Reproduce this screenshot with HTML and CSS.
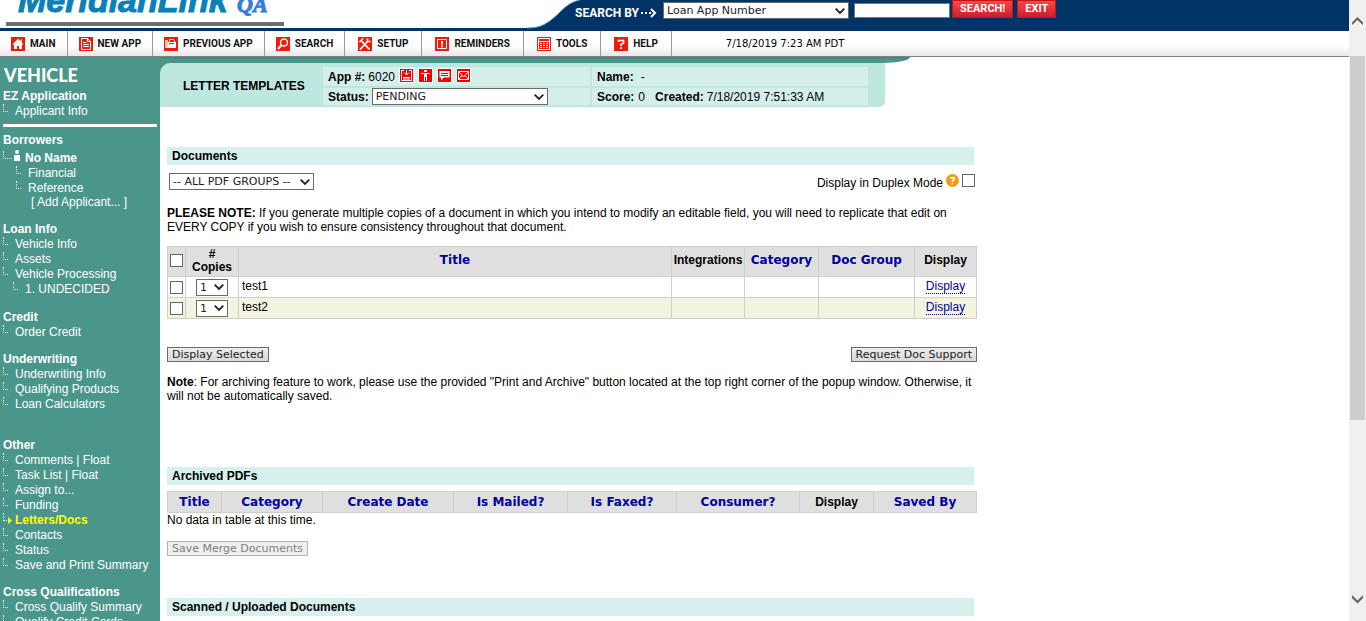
FILE: index.html
```html
<!DOCTYPE html>
<html lang="en">
<head>
<meta charset="utf-8">
<title>Letter Templates</title>
<link rel="stylesheet" href="styles.css">
</head>
<body>
<svg class="defs" aria-hidden="true">
  <symbol id="chev" viewBox="0 0 10 6"><path d="M0.7 0.7L5 5l4.300-4.300" fill="none" stroke="#222" stroke-width="1.800"/></symbol>
</svg>
<div class="window">
  <div class="page">
    <header class="top">
      <svg class="brand" width="575" height="28" viewBox="0 0 575 28" role="img" aria-label="MeridianLink QA">
        <path d="M0 0H580C570 2 565 7 558 14C547 24 541 28 527 28H0Z" fill="#fff"/>
        <path d="M580 0C570 2 565 7 558 14C547 24 541 28 527 28" fill="none" stroke="#5fa0b8" stroke-width="1"/>
        <text class="logo" x="18" y="12">MeridianLink</text>
        <text class="logo-qa" x="237" y="12">QA</text>
        <path d="M6 22H284V26H6Z" fill="#6e6e6e"/>
      </svg>
      <form class="finder">
        <label class="finder-label" for="by">SEARCH BY</label>
        <svg class="finder-arrow" width="17" height="10" viewBox="0 0 17 10"><path d="M1 5h2M5 5h2M9 5h2M11 1l4 4-4 4" fill="none" stroke="#fff" stroke-width="2"/></svg>
        <span class="pick pick-by"><select id="by"><option>Loan App Number</option></select><svg><use href="#chev"/></svg></span>
        <input class="query" type="text" aria-label="Search text">
        <button class="red" type="button">SEARCH!</button>
        <button class="red exit" type="button">EXIT</button>
      </form>
    </header>
    <nav class="nav">
      <a href="#"><svg viewBox="0 0 14 14"><path d="M0 0h14v14H0z" fill="#f21b0b"/><path d="M7 1.500L1.500 7.500H3V12h3V9h2v3h3V7.500h1.500L11 5.800V2.500H9.500v1.800z" fill="#fff"/></svg>MAIN</a>
      <a href="#"><svg viewBox="0 0 14 14"><path d="M0 0h14v14H0z" fill="#f21b0b"/><path d="M2.500 1.500h6l3 3v8h-9zM8.500 1.500v3h3M4 5.500h3.500M4 7.500h6M4 9.500h6" fill="none" stroke="#fff"/></svg>NEW APP</a>
      <a href="#"><svg viewBox="0 0 14 14"><path d="M0 0h14v14H0z" fill="#f21b0b"/><path d="M3 5h9v6H3z" fill="#fff"/><path d="M1 3h3v2l-1 6H1z" fill="#ffc37d"/><path d="M5.500 5V2.500h4l1 1V5" fill="none" stroke="#fff"/><path d="M5 6.500h5" stroke="#f21b0b"/></svg>PREVIOUS APP</a>
      <a href="#"><svg viewBox="0 0 14 14"><path d="M0 0h14v14H0z" fill="#f21b0b"/><circle cx="8" cy="5.500" r="3.500" fill="none" stroke="#fff" stroke-width="1.400"/><path d="M5.500 8L2 12" stroke="#fff" stroke-width="2"/></svg>SEARCH</a>
      <a class="wide" href="#"><svg viewBox="0 0 14 14"><path d="M0 0h14v14H0z" fill="#f21b0b"/><path d="M3 3.500l8.500 9M2 12.500l8-8.500" stroke="#fff" stroke-width="1.800"/><path d="M1.500 5L5 1.500M9.500 1.500v3h3" fill="none" stroke="#fff" stroke-width="1.600"/></svg>SETUP</a>
      <a class="wide" href="#"><svg viewBox="0 0 14 14"><path d="M0 0h14v14H0z" fill="#f21b0b"/><path d="M2.500 2.500h9v9h-9z" fill="none" stroke="#fff"/><path d="M6 4h2v3.500H6zM6 8.500h2v1.800H6z" fill="#fff"/></svg>REMINDERS</a>
      <a class="wide" href="#"><svg viewBox="0 0 14 14"><path d="M0 0h14v14H0z" fill="#f21b0b"/><path d="M1.500 1.500h11v11h-11zM1.500 4.500h11" fill="none" stroke="#fff"/><path d="M3 6.500h8M3 8.500h8M3 10.500h8" stroke="#fff" stroke-dasharray="2 1"/></svg>TOOLS</a>
      <a class="wide" href="#"><svg viewBox="0 0 14 14"><path d="M0 0h14v14H0z" fill="#f21b0b"/><path d="M4.500 5V3.500h5V6L7 7.500V9" fill="none" stroke="#fff" stroke-width="1.700"/><path d="M6 10h2v2H6z" fill="#fff"/></svg>HELP</a>
      <time class="clock">7/18/2019 7:23 AM PDT</time>
    </nav>
    <div class="body">
      <aside class="side">
        <h1>VEHICLE</h1>
        <section class="ez">
          <h2>EZ Application</h2>
          <ul><li><i></i><a href="#">Applicant Info</a></li></ul>
        </section>
        <section class="roomy">
          <h2>Borrowers</h2>
          <ul>
            <li class="person"><i></i><svg width="6" height="11" viewBox="0 0 6 11"><circle cx="3" cy="2" r="2" fill="#fff"/><path d="M0 5h6v6H0z" fill="#fff"/></svg><a href="#">No Name</a></li>
            <li class="deep"><i></i><a href="#">Financial</a></li>
            <li class="deep"><i></i><a href="#">Reference</a></li>
            <li class="add"><a href="#">[ Add Applicant... ]</a></li>
          </ul>
        </section>
        <section class="roomy">
          <h2>Loan Info</h2>
          <ul>
            <li><i></i><a href="#">Vehicle Info</a></li>
            <li><i></i><a href="#">Assets</a></li>
            <li><i></i><a href="#">Vehicle Processing</a></li>
            <li class="sub"><i></i><a href="#">1. UNDECIDED</a></li>
          </ul>
        </section>
        <section>
          <h2>Credit</h2>
          <ul><li><i></i><a href="#">Order Credit</a></li></ul>
        </section>
        <section class="spaced">
          <h2>Underwriting</h2>
          <ul>
            <li><i></i><a href="#">Underwriting Info</a></li>
            <li><i></i><a href="#">Qualifying Products</a></li>
            <li><i></i><a href="#">Loan Calculators</a></li>
          </ul>
        </section>
        <section>
          <h2>Other</h2>
          <ul>
            <li><i></i><span><a href="#">Comments</a> | <a href="#">Float</a></span></li>
            <li><i></i><span><a href="#">Task List</a> | <a href="#">Float</a></span></li>
            <li><i></i><a href="#">Assign to...</a></li>
            <li><i></i><a href="#">Funding</a></li>
            <li class="current"><i></i><svg width="4" height="7" viewBox="0 0 4 7"><path d="M0 0l4 3.500L0 7z" fill="#ff0"/></svg><a href="#">Letters/Docs</a></li>
            <li><i></i><a href="#">Contacts</a></li>
            <li><i></i><a href="#">Status</a></li>
            <li><i></i><a href="#">Save and Print Summary</a></li>
          </ul>
        </section>
        <section>
          <h2>Cross Qualifications</h2>
          <ul>
            <li><i></i><a href="#">Cross Qualify Summary</a></li>
            <li><i></i><a href="#">Qualify Credit Cards</a></li>
          </ul>
        </section>
      </aside>
      <main class="main">
        <div class="lip"></div>
        <div class="banner-wrap">
          <div class="banner">
            <strong class="banner-title">LETTER TEMPLATES</strong>
            <div class="facts">
              <div class="fact"><b>App #:</b> <span class="num">6020</span>
                <span class="minis">
                  <svg viewBox="0 0 13 13"><path d="M0 0h13v13H0z" fill="#f30000"/><path d="M4 1.500H1.500v10h10v-10H9M3 8.500h7M3 10h7" fill="none" stroke="#fff"/><path d="M6.500 1v4M4 3.500L6.500 6 9 3.500" fill="none" stroke="#fff"/></svg>
                  <svg viewBox="0 0 13 13"><path d="M0 0h13v13H0z" fill="#f30000"/><path d="M5 1h3v2H5zM2 4h9v1H8v7H7V8H6v4H5V5H2z" fill="#fff"/></svg>
                  <svg viewBox="0 0 13 13"><path d="M0 0h13v13H0z" fill="#f30000"/><path d="M1.500 2h10v6.500H6L3 11.500v-3H1.500z" fill="#fff"/><path d="M3 4.500h7M3 6.500h7" stroke="#f30000"/></svg>
                  <svg viewBox="0 0 13 13"><path d="M0 0h13v13H0z" fill="#f30000"/><path d="M1.500 2.500h10v8h-10zM1.500 2.500L6.500 8l5-5.500M1.500 10.500L5 6.500M11.500 10.500L8 6.500" fill="none" stroke="#fff"/></svg>
                </span>
              </div>
              <div class="fact"><b>Name:</b><span class="val dash">-</span></div>
              <div class="fact"><label for="st">Status:</label><span class="pick pick-status"><select id="st"><option>PENDING</option></select><svg><use href="#chev"/></svg></span></div>
              <div class="fact"><b>Score:</b><span class="val">0</span><b class="created">Created:</b><span>7/18/2019 7:51:33 AM</span></div>
            </div>
          </div>
        </div>
        <div class="content">
          <h3>Documents</h3>
          <div class="tools">
            <span class="pick pick-group"><select aria-label="PDF group"><option>-- ALL PDF GROUPS --</option></select><svg><use href="#chev"/></svg></span>
            <div class="duplex">
              <label for="dup">Display in Duplex Mode</label>
              <svg width="13" height="13" viewBox="0 0 13 13"><circle cx="6.500" cy="6.500" r="6.500" fill="#f09c12"/><path d="M4.700 5V3.700h3.600V5.700L6.500 6.700V8M6.500 9v1.500" fill="none" stroke="#fff" stroke-width="1.400"/></svg>
              <input type="checkbox" id="dup">
            </div>
          </div>
          <p><b>PLEASE NOTE:</b> If you generate multiple copies of a document in which you intend to modify an editable field, you will need to replicate that edit on EVERY COPY if you wish to ensure consistency throughout that document.</p>
          <table class="docs">
            <colgroup><col class="w18"><col class="w53"><col><col class="w73"><col class="w74"><col class="w96"><col class="w62"></colgroup>
            <thead><tr>
              <th><input type="checkbox" aria-label="Select all"></th><th class="copies">#<br>Copies</th><th><a href="#">Title</a></th><th>Integrations</th><th><a href="#">Category</a></th><th><a href="#">Doc Group</a></th><th>Display</th>
            </tr></thead>
            <tbody>
              <tr><td><input type="checkbox" aria-label="Select test1"></td><td><span class="pick pick-n"><select aria-label="Copies of test1"><option>1</option></select><svg><use href="#chev"/></svg></span></td><td class="name">test1</td><td></td><td></td><td></td><td class="act"><a href="#">Display</a></td></tr>
              <tr><td><input type="checkbox" aria-label="Select test2"></td><td><span class="pick pick-n"><select aria-label="Copies of test2"><option>1</option></select><svg><use href="#chev"/></svg></span></td><td class="name">test2</td><td></td><td></td><td></td><td class="act"><a href="#">Display</a></td></tr>
            </tbody>
          </table>
          <div class="actions"><button class="gray" type="button">Display Selected</button><button class="gray" type="button">Request Doc Support</button></div>
          <p><b>Note</b>: For archiving feature to work, please use the provided "Print and Archive" button located at the top right corner of the popup window. Otherwise, it will not be automatically saved.</p>
          <h3 class="archived">Archived PDFs</h3>
          <table class="arch">
            <colgroup><col class="w54"><col class="w101"><col class="w131"><col class="w114"><col class="w109"><col class="w123"><col class="w74"><col></colgroup>
            <thead><tr><th><a href="#">Title</a></th><th><a href="#">Category</a></th><th><a href="#">Create Date</a></th><th><a href="#">Is Mailed?</a></th><th><a href="#">Is Faxed?</a></th><th><a href="#">Consumer?</a></th><th>Display</th><th><a href="#">Saved By</a></th></tr></thead>
          </table>
          <div class="empty">No data in table at this time.</div>
          <button class="gray" type="button" disabled>Save Merge Documents</button>
          <h3 class="scanned">Scanned / Uploaded Documents</h3>
        </div>
      </main>
    </div>
  </div>
  <div class="scroll" aria-hidden="true">
    <svg class="up" width="11" height="9" viewBox="0 0 11 9"><path d="M0 8V5.500L5.500 0 11 5.500V8L5.500 3z" fill="#606060"/></svg>
    <div class="thumb"></div>
    <svg class="down" width="11" height="9" viewBox="0 0 11 9"><path d="M0 0v3l5.500 5.500L11 3V0L5.500 5.500z" fill="#606060"/></svg>
  </div>
</div>
</body>
</html>
```

FILE: styles.css
```css
* { box-sizing: border-box; }
body { margin: 0; font: 12px/14px "Liberation Sans", Arial, sans-serif; color: #000; background: #fff; }
a { color: inherit; text-decoration: none; }
h1, h2, h3, p, ul { margin: 0; padding: 0; }
ul { list-style: none; }
.defs { position: absolute; width: 0; height: 0; }

.window { display: flex; height: 100vh; overflow: hidden; }
.page { flex: 1; min-width: 0; display: flex; flex-direction: column; }

/* Top bar */
.top { display: flex; background: #003366; height: 31px; }
.brand { flex: none; overflow: visible; }
.logo { font: italic bold 34px "Liberation Sans", Arial, sans-serif; fill: #0a80b8; stroke: #0a80b8; stroke-width: 1px; }
.logo-qa { font: italic bold 22px "Liberation Serif", serif; fill: #2f7de0; stroke: #2f7de0; stroke-width: 1px; }
.finder { display: flex; align-items: flex-start; }
.finder-label, .red, .nav a { font-family: Roboto, "Liberation Sans", sans-serif; font-weight: bold; }
.finder-label { color: #fff; font-size: 12px; line-height: 14px; padding-top: 6px; width: 65px; white-space: nowrap; }
.finder-arrow { margin: 8px 6px 0 0; }
.query { width: 96px; height: 15px; margin: 3px 2px 0 5px; border: 1px solid #777; padding: 0; background: #fff; }
.red { height: 18px; padding: 0 7px; border: 1px solid #c4141a; background: linear-gradient(#ff4545, #c8202a); color: #fff; font-size: 11px; line-height: 16px; }
.exit { margin-left: 4px; }

/* Drop-downs */
.pick { display: inline-grid; align-items: center; height: 17px; }
.pick select, .pick svg { grid-area: 1 / 1; }
.pick select { appearance: none; width: 100%; height: 17px; margin: 0; padding: 1px 3px 0; border: 1px solid #6b6b6b; border-radius: 0; background: #fff; color: #222; font: 11px/14px "DejaVu Sans", Verdana, sans-serif; }
.pick svg { justify-self: end; width: 10px; height: 6px; margin-right: 4px; pointer-events: none; }
.pick-by { width: 186px; margin-top: 2px; }
.pick-status { width: 176px; }
.pick-group { width: 145px; }
.pick-n { width: 32px; }

/* Menu */
.nav { display: flex; align-items: center; height: 26px; border-bottom: 1px solid #808080; background: linear-gradient(#fff 60%, #e8e8e8); }
.nav a { display: flex; align-items: center; gap: 5px; height: 25px; padding: 0 11px; border-right: 1px solid #999; font-size: 10px; color: #111; white-space: nowrap; }
.nav .wide { padding: 0 13px; }
.nav svg { width: 14px; height: 14px; }
.clock { margin-left: 54px; font: 10px/12px "DejaVu Sans", Verdana, sans-serif; }

/* Sidebar */
.body { flex: 1; min-height: 0; display: flex; overflow: hidden; }
.side { flex: none; width: 160px; padding-top: 7px; background: #4b968b; color: #fff; line-height: 15px; }
.side h1 { padding-left: 4px; margin-bottom: 3px; font: 900 18px/22px Lato, Roboto, sans-serif; }
.side section { margin-bottom: 12px; }
.side .roomy { margin-bottom: 13px; }
.side .ez { margin: 0 3px 6px; padding-bottom: 5px; border-bottom: 3px solid #fff; }
.side h2 { padding-left: 3px; font-size: 12px; line-height: 15px; }
.side .ez h2 { padding-left: 0; }
.side .ez li { padding-left: 0; }
.side .spaced { margin-bottom: 26px; }
.side li { display: flex; height: 15px; padding-left: 3px; white-space: nowrap; }
.side i { width: 5px; height: 8px; margin-right: 7px; border: 1px dotted #e4f2ef; border-width: 0 0 1px 1px; }
.side .person { margin-top: 3px; font-weight: bold; }
.person i { width: 9px; margin-right: 2px; }
.person svg { margin: -1px 5px 0 0; }
.side .deep { padding-left: 16px; }
.side .sub { padding-left: 13px; }
.side .add { padding-left: 31px; height: 13px; line-height: 13px; }
.side .current { color: #ff0; font-weight: bold; }
.current i { width: 4px; margin-right: 1px; }
.current svg { margin: 4px 3px 0 0; }

/* Banner */
.main { flex: 1; min-width: 0; }
.lip { max-width: 750px; height: 6px; background: linear-gradient(#3f8479, #4b968b 50%); border-bottom-right-radius: 28px 6px; }
.banner-wrap { background: linear-gradient(#4b968b, #4b968b) no-repeat 0 0 / 10px 10px; }
.banner { display: flex; max-width: 725px; height: 44px; border-radius: 10px 0 6px 0; background: #bee7e0; }
.banner-title { flex: 0 0 163px; padding-left: 23px; line-height: 46px; }
.facts { flex: 1; display: grid; grid-template: 19px 17px / 267px 1fr; gap: 2px; padding: 4px 17px 0 0; }
.fact { display: flex; align-items: center; padding-left: 5px; background: #d4efe9; white-space: nowrap; }
.fact label { font-weight: bold; margin-right: 3px; }
.num { margin: 0 4px 0 3px; }
.minis { display: flex; gap: 4px; padding-bottom: 2px; }
.minis svg { width: 15px; height: 15px; border: 1px solid #fff; }
.val { margin-left: 4px; }
.dash { margin-left: 7px; }
.created { margin: 0 3px 0 10px; }

/* Content */
.content { max-width: 817px; padding: 40px 0 0 7px; }
h3 { height: 18px; margin-right: 3px; padding-left: 5px; background: #d6f1ed; font-size: 12px; line-height: 18px; }
.tools { display: flex; justify-content: space-between; padding: 8px 2px 14px; }
.duplex { display: flex; gap: 3px; padding-top: 1px; }
.duplex label { line-height: 18px; }
input[type="checkbox"] { appearance: none; display: block; width: 13px; height: 13px; margin: 0; border: 1px solid #666; background: #fff; }
table { width: 100%; table-layout: fixed; border-collapse: collapse; }
th, td { padding: 0; border: 1px solid #d2cec3; }
th { background: #dfdfdf; line-height: 13px; }
th a { color: #00009b; font: bold 12px/15px "DejaVu Sans", Verdana, sans-serif; }
td { height: 21px; text-align: center; }
th input, td input { margin: 0 auto !important; }
.docs { margin-top: 12px; }
.docs thead tr { height: 30px; }
.docs thead th { padding-bottom: 2px; }
.docs tbody tr:nth-child(2) { background: #f2f4e0; }
.docs .name { text-align: left; padding: 0 0 2px 3px; }
.docs .act { padding-bottom: 2px; }
.docs td .pick { vertical-align: middle; }
.act a { border-bottom: 1px dotted #00009b; color: #00009b; }
.w18 { width: 18px; } .w53 { width: 53px; } .w54 { width: 54px; } .w62 { width: 62px; }
.w73 { width: 73px; } .w74 { width: 74px; } .w96 { width: 96px; } .w101 { width: 101px; }
.w109 { width: 109px; } .w114 { width: 114px; } .w123 { width: 123px; } .w131 { width: 131px; }
.actions { display: flex; justify-content: space-between; margin: 28px 0 13px; }
.gray { display: block; height: 15px; padding: 0 4px; border: 1px solid #6b6b6b; background: linear-gradient(#eee, #d8d8d8); color: #222; font: 11px/13px "DejaVu Sans", Verdana, sans-serif; white-space: nowrap; }
.gray:disabled { border-color: #b4b4b4; background: #efefef; color: #808080; }
.archived { margin-top: 64px; }
.arch { margin-top: 6px; }
.arch tr { height: 21px; }
.empty { margin-bottom: 14px; }
.scanned { margin-top: 42px; }

/* Scroll column */
.scroll { flex: none; width: 17px; display: flex; flex-direction: column; align-items: center; padding: 17px 1px; background: #f0f0f0; }
.thumb { width: 100%; height: 62%; flex: 0 1 auto; margin-top: 30px; background: #cdcdcd; }
.scroll .up, .scroll .down { flex: none; }
.scroll .down { margin-top: auto; }
```
